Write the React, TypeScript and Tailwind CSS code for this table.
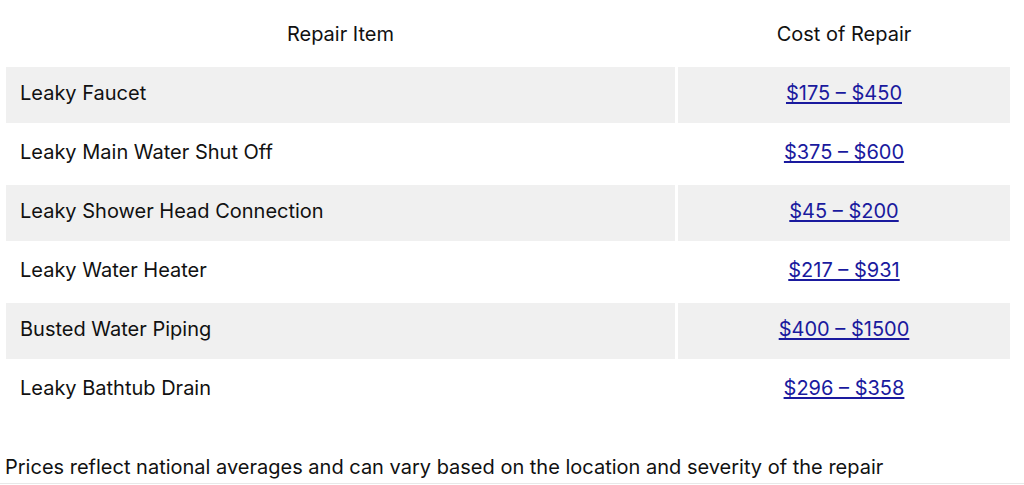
import React from 'react';

const rows = [
  { item: 'Leaky Faucet', cost: '$175 – $450' },
  { item: 'Leaky Main Water Shut Off', cost: '$375 – $600' },
  { item: 'Leaky Shower Head Connection', cost: '$45 – $200' },
  { item: 'Leaky Water Heater', cost: '$217 – $931' },
  { item: 'Busted Water Piping', cost: '$400 – $1500' },
  { item: 'Leaky Bathtub Drain', cost: '$296 – $358' },
];

const App: React.FC = () => {
  return (
    <div className="w-[1024px] h-[485px] bg-white text-[#111] font-['Inter','Liberation_Sans',sans-serif] overflow-hidden">
      <div className="px-[3px] pt-[5px]">
        <table className="w-[1010px] border-separate border-spacing-[3px] text-[20px]">
          <thead>
            <tr>
              <th className="w-[669px] h-[56px] pb-[4px] font-normal text-center">Repair Item</th>
              <th className="h-[56px] pb-[4px] font-normal text-center">Cost of Repair</th>
            </tr>
          </thead>
          <tbody>
            {rows.map((row, i) => (
              <tr key={row.item}>
                <td className={`h-[56px] pl-[14px] pb-[4px] ${i % 2 === 0 ? 'bg-[#f0f0f0]' : ''}`}>{row.item}</td>
                <td className={`h-[56px] pb-[4px] text-center ${i % 2 === 0 ? 'bg-[#f0f0f0]' : ''}`}>
                  <a href="#" className="text-[#1a1a9e] underline underline-offset-2">
                    {row.cost}
                  </a>
                </td>
              </tr>
            ))}
          </tbody>
        </table>
      </div>
      <p className="mt-[32px] pl-[5px] text-[20px] leading-[28px] pb-[2px] border-b border-[#e8e8e8]">
        Prices reflect national averages and can vary based on the location and severity of the repair
      </p>
    </div>
  );
};

export default App;
